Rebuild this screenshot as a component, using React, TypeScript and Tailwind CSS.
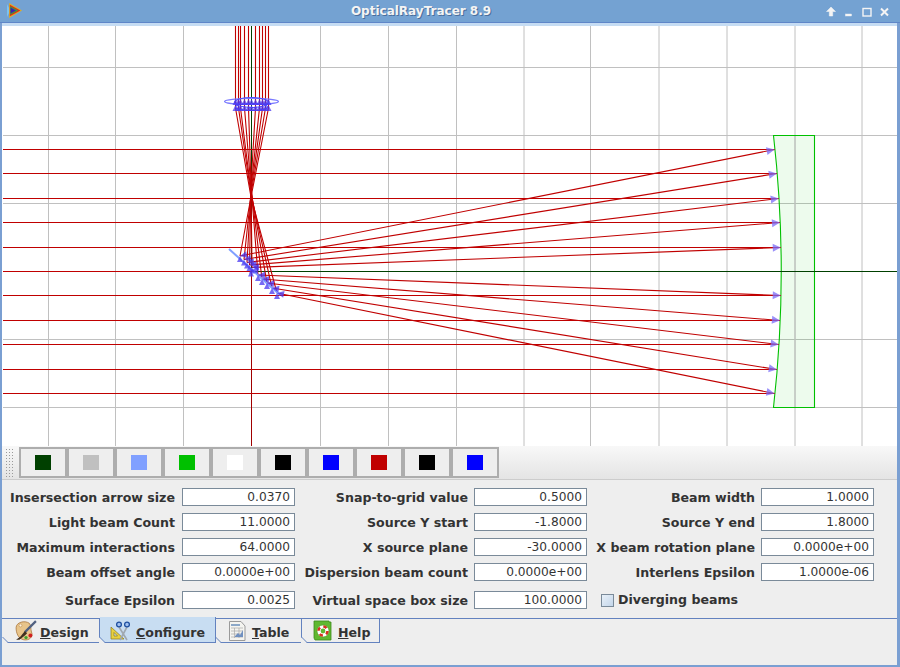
const GRID_X = [48.5, 115.5, 183.5, 320.5, 388.5, 456.5, 524, 590.5, 659, 727, 795, 862]
const GRID_Y = [67.5, 135.5, 203.5, 339.5, 407.5]

// incoming ray heights, where each one lands on the mirror, and its x at the top lens
const RAY_Y = [149.5, 173.5, 198.5, 222.5, 247.5, 271.5, 295.5, 320.5, 344.5, 369.5, 393.5]
const MIRROR = [
  [240, 256], [244, 259.5], [247, 262.5], [249.5, 265], [252, 267.5], [251, 270.5],
  [258, 275], [262, 279], [267, 283], [272, 288], [277, 293],
]
const TOP_X = [268.5, 265.5, 262.5, 259.5, 255.5, 251.5, 248.5, 244.5, 240.5, 238.5, 235.5]

const lensX = (y: number) => 781 - 8 * ((y - 271) / 135.5) ** 2

function Arrow({ x, y, fromX, fromY, size = 8, dark }: { x: number; y: number; fromX: number; fromY: number; size?: number; dark?: boolean }) {
  const a = (Math.atan2(y - fromY, x - fromX) * 180) / Math.PI
  return (
    <polygon
      points={`0,0 ${-size},${-size * 0.5} ${-size},${size * 0.5}`}
      transform={`translate(${x} ${y}) rotate(${a})`}
      fill={dark ? '#4a38f0' : '#7a6cf8'}
      fillOpacity={0.75}
    />
  )
}

function RayCanvas() {
  return (
    <svg viewBox="2 26 895 420" className="block h-[420px] w-[895px] bg-white">
      {GRID_X.map((x) => (
        <line key={x} x1={x} x2={x} y1={26} y2={446} stroke="#c0c0c0" />
      ))}
      {GRID_Y.map((y) => (
        <line key={y} x1={3} x2={897} y1={y} y2={y} stroke="#c0c0c0" />
      ))}

      {/* big lens */}
      <path d="M773.5 135.5 Q789 271 773.5 407.5 L814.5 407.5 L814.5 135.5 Z" fill="#00c000" fillOpacity={0.07} stroke="#00c000" strokeWidth={1.1} />
      <line x1={795} x2={795} y1={136} y2={407} stroke="#c0c0c0" />

      {/* axes */}
      <line x1={251.5} x2={251.5} y1={26} y2={271} stroke="#004000" />
      <line x1={251.5} x2={897} y1={271.5} y2={271.5} stroke="#004000" />
      <line x1={251.5} x2={251.5} y1={271} y2={446} stroke="#a00000" />
      <line x1={3} x2={251} y1={271.5} y2={271.5} stroke="#c00000" />

      {/* rays, the outer ones cross a little before the focus */}
      {RAY_Y.map((y, i) => {
        if (i === 5) return null
        const hit = lensX(y)
        const [mx, my] = MIRROR[i]
        const crossY = 182 + 3 * Math.abs(i - 5)
        return (
          <g key={y} fill="none" stroke="#c00000" strokeWidth={1.1}>
            <line x1={3} x2={hit} y1={y} y2={y} />
            <line x1={hit} y1={y} x2={mx} y2={my} />
            <polyline points={`${mx},${my} 251,${crossY} ${TOP_X[i]},108 ${TOP_X[i]},26`} />
          </g>
        )
      })}

      {/* top lens */}
      <g fill="none" stroke="#7a7aff" strokeWidth={1.2}>
        <ellipse cx={251.5} cy={101.5} rx={27} ry={3} />
        <ellipse cx={251.5} cy={102.5} rx={17} ry={5} stroke="#5050ff" />
        <ellipse cx={251.5} cy={107} rx={16} ry={3.5} stroke="#5050ff" />
      </g>
      {TOP_X.map((x) => (
        <g key={x}>
          <Arrow x={x} y={99} fromX={x} fromY={105} size={6} dark />
          <Arrow x={x} y={105} fromX={x} fromY={111} size={6} dark />
        </g>
      ))}

      {/* mirror */}
      <line x1={229} y1={249} x2={280} y2={295} stroke="#80a0ff" strokeWidth={2} />
      {RAY_Y.map((y, i) => (
        <g key={y}>
          {i !== 5 && <Arrow x={lensX(y)} y={y} fromX={MIRROR[i][0]} fromY={MIRROR[i][1]} />}
          <Arrow x={MIRROR[i][0]} y={MIRROR[i][1]} fromX={lensX(y)} fromY={i === 5 ? MIRROR[i][1] : y} size={7} dark />
          <Arrow x={MIRROR[i][0]} y={MIRROR[i][1]} fromX={MIRROR[i][0]} fromY={MIRROR[i][1] + 8} size={6} dark />
        </g>
      ))}
    </svg>
  )
}

function TitleBar() {
  return (
    <div className="relative flex h-[22px] items-center justify-center bg-[#74a2d2]">
      <svg viewBox="0 0 14 14" className="absolute left-[7px] top-[3px] h-[15px] w-[15px]">
        <path d="M0 1 L3 7 L0 13 Z" fill="#7cc4f0" />
        <path d="M2 0 L14 7 L2 14 Z" fill="#e0b020" />
        <path d="M2.6 1.6 L12.4 7 L2.6 12.4 Z" fill="#e02020" />
        <path d="M3 3 L10.4 7 L3 11 Z" fill="#30b030" />
        <path d="M3.4 4.3 L8.4 7 L3.4 9.7 Z" fill="#4020b0" />
      </svg>
      <span className="ml-[-58px] font-['DejaVu_Sans',sans-serif] text-[12px] font-bold text-[#f4f4f4] [text-shadow:1px_1px_0_#4a6f9c]">
        OpticalRayTracer 8.9
      </span>
      <div className="absolute right-0 top-0 h-[22px] w-[80px]">
        <svg viewBox="0 0 80 22" className="h-[22px] w-[80px]" fill="#f4f4f4" stroke="#f4f4f4">
          <path d="M11 8 L15.5 12.5 H12.7 V17 H9.3 V12.5 H6.5 Z" strokeWidth={0.5} transform="translate(0 -1)" />
          <rect x={25.5} y={14} width={6} height={2} strokeWidth={0.4} />
          <rect x={43} y={8.5} width={8} height={7.5} fill="none" strokeWidth={1.4} />
          <path d="M61 8.5 L68 15.5 M68 8.5 L61 15.5" fill="none" strokeWidth={2} />
        </svg>
      </div>
    </div>
  )
}

const SWATCHES = ['#004000', '#c0c0c0', '#80a0ff', '#00c000', '#ffffff', '#000000', '#0000ff', '#c00000', '#000000', '#0000ff']

function ColorBar() {
  return (
    <div className="flex h-[34px] items-start border-b border-[#cccccc] bg-gradient-to-b from-[#f8f8f8] to-[#e4e4e4] pl-[3px] pt-px">
      <div className="mr-[4px] mt-[1px] h-[30px] w-[10px] bg-[radial-gradient(#9a9a9a_1px,transparent_1px)] bg-[length:3px_3px]" />
      {SWATCHES.map((c, i) => (
        <div key={i} className="flex h-[31px] w-[48px] items-center justify-center border-2 border-[#adadad] bg-[#eeeeee]">
          <div className="h-[15px] w-[16px]" style={{ background: c }} />
        </div>
      ))}
    </div>
  )
}

function Label({ children, first }: { children: string; first?: boolean }) {
  return (
    <div className={`pt-px text-right font-['DejaVu_Sans',sans-serif] text-[12.6px] font-bold leading-[17px] text-[#333333] ${first ? 'pr-[7px]' : 'pr-[6px]'}`}>
      {children}
    </div>
  )
}

function Field({ value }: { value: string }) {
  return (
    <div className="flex h-[18px] items-center justify-end border border-[#7a8a99] bg-white pr-[4px] pt-px font-['DejaVu_Sans',sans-serif] text-[12.2px] leading-[15px] text-[#333333]">
      {value}
    </div>
  )
}

const ROWS = [
  ['Insersection arrow size', '0.0370', 'Snap-to-grid value', '0.5000', 'Beam width', '1.0000'],
  ['Light beam Count', '11.0000', 'Source Y start', '-1.8000', 'Source Y end', '1.8000'],
  ['Maximum interactions', '64.0000', 'X source plane', '-30.0000', 'X beam rotation plane', '0.0000e+00'],
  ['Beam offset angle', '0.0000e+00', 'Dispersion beam count', '0.0000e+00', 'Interlens Epsilon', '1.0000e-06'],
]

function ConfigForm() {
  return (
    <div className="grid h-[138px] grid-cols-[180px_113px_179px_113px_174px_113px] content-start items-center gap-y-[7px] pt-[8px]">
      {ROWS.map((r) => (
        <div key={r[0]} className="contents">
          <Label first>{r[0]}</Label>
          <Field value={r[1]} />
          <Label>{r[2]}</Label>
          <Field value={r[3]} />
          <Label>{r[4]}</Label>
          <Field value={r[5]} />
        </div>
      ))}
      <div className="contents">
        <div className="mt-[3px]"><Label first>Surface Epsilon</Label></div>
        <div className="mt-[3px]"><Field value="0.0025" /></div>
        <div className="mt-[3px]"><Label>Virtual space box size</Label></div>
        <div className="mt-[3px]"><Field value="100.0000" /></div>
        <div className="col-span-2 mt-[3px] flex items-center pl-[14px] font-['DejaVu_Sans',sans-serif] text-[12.6px] font-bold leading-[18px] text-[#333333]">
          <div className="mr-[4px] h-[13px] w-[13px] border border-[#7a8a99] bg-gradient-to-br from-[#e8f0f8] to-[#c4d6ea]" />
          Diverging beams
        </div>
      </div>
    </div>
  )
}

function DesignIcon() {
  return (
    <svg viewBox="0 0 20 20" className="h-[22px] w-[22px]">
      <path d="M1 7 C1 2 9 0 13 3 C15 5 14 8 15 11 C17 15 13 19 8 18 C3 17 1 12 1 7 Z" fill="#e8c48a" stroke="#a8743a" strokeWidth={0.7} />
      <circle cx={5} cy={5} r={1.3} fill="#fff2d8" stroke="#a8743a" strokeWidth={0.4} />
      <circle cx={14} cy={14} r={1.8} fill="#d02020" />
      <circle cx={10} cy={16} r={1.5} fill="#40a030" />
      <path d="M19 1 L9 11" stroke="#506080" strokeWidth={2} />
      <path d="M9 10 L5 15 L1 18 L4 18 L9 14 L11 12 Z" fill="#403020" />
    </svg>
  )
}

function ConfigureIcon() {
  return (
    <svg viewBox="0 0 22 20" className="h-[20px] w-[22px]">
      <path d="M1 18 L1 6 L14 18 Z M4 15 L7.5 15 L4 11.5 Z" fill="#e8d040" fillRule="evenodd" stroke="#8a7a20" strokeWidth={0.7} />
      <path d="M9 6 L17 19 M17 6 L10 19" stroke="#a0a8b0" strokeWidth={1.6} />
      <circle cx={9} cy={3.5} r={2.4} fill="#a0c0f0" stroke="#2050a0" strokeWidth={1.3} />
      <circle cx={17} cy={3.5} r={2.4} fill="#a0c0f0" stroke="#2050a0" strokeWidth={1.3} />
    </svg>
  )
}

function TableIcon() {
  return (
    <svg viewBox="0 0 18 20" className="h-[20px] w-[18px]">
      <path d="M1.5 0.5 H13 L17 5 V19.5 H1.5 Z" fill="#f4f4f0" stroke="#9a9a9a" />
      <rect x={3} y={3} width={9} height={2} fill="#8ca8c8" />
      <path d="M3 7 H15 M3 10 H15 M3 13 H15 M3 16 H15 M6.5 7 V17 M11 7 V17" stroke="#a8a8a8" strokeWidth={0.7} />
      <path d="M7 15 L10 12 L12 14 L15 9 V16 H7 Z" fill="#7090c0" />
    </svg>
  )
}

function HelpIcon() {
  return (
    <svg viewBox="0 0 19 21" className="h-[21px] w-[19px]">
      <path d="M1 1 H16 V2 H18 V20 H2 L1 18 Z" fill="#60b830" stroke="#3c8a1c" strokeWidth={0.8} />
      <circle cx={10} cy={11} r={6} fill="#ffffff" stroke="#4a9a24" strokeWidth={0.6} />
      <circle cx={10} cy={11} r={4.5} fill="none" stroke="#d83020" strokeWidth={2.6} strokeDasharray="3.5 3.5" />
      <circle cx={10} cy={11} r={2.4} fill="#60b830" />
    </svg>
  )
}

const TABS = [
  { letter: 'D', rest: 'esign', icon: <DesignIcon />, width: 'w-[97px]', pad: 'pl-[12px]', gap: 'gap-[3px]' },
  { letter: 'C', rest: 'onfigure', icon: <ConfigureIcon />, width: 'w-[116px]', pad: 'pl-[10px]', gap: 'gap-[4px]', active: true },
  { letter: 'T', rest: 'able', icon: <TableIcon />, width: 'w-[86px]', pad: 'pl-[12px]', gap: 'gap-[6px]' },
  { letter: 'H', rest: 'elp', icon: <HelpIcon />, width: 'w-[78px]', pad: 'pl-[11px]', gap: 'gap-[6px]' },
]

function TabStrip() {
  return (
    <div className="flex h-[47px] items-start border-t border-[#6382bf] bg-[#eeeeee] pl-px">
      {TABS.map((t) => (
        <div
          key={t.letter}
          className={`relative flex items-center ${t.width} ${t.pad} ${t.gap} border-b border-r border-[#6382bf] font-['DejaVu_Sans',sans-serif] text-[12.6px] font-bold leading-[17px] text-[#333333] ${
            t.active ? 'z-10 -mt-[2px] h-[26px] bg-[#c8ddf2] pt-[2px]' : 'h-[24px] bg-[#eeeeee]'
          }`}
        >
          <svg viewBox="0 0 6 6" className="absolute -bottom-px -left-px h-[6px] w-[6px]">
            <path d="M0 0 V6 H6 Z" fill="#eeeeee" />
            <path d="M0.5 0 L6 5.5" stroke="#6382bf" />
          </svg>
          {t.icon}
          <span className="pt-[3px]">
            <u>{t.letter}</u>
            {t.rest}
          </span>
        </div>
      ))}
    </div>
  )
}

export default function App() {
  return (
    <div className="flex h-[667px] w-[900px] flex-col overflow-hidden bg-[#eeeeee]">
      <TitleBar />
      <div className="h-px bg-[#5f86c8]" />
      <div className="flex flex-1 flex-col border-b-2 border-l-2 border-r-[3px] border-[#7a9fd2]">
        <div className="h-[3px] bg-[#c5dcf3]" />
        <RayCanvas />
        <ColorBar />
        <ConfigForm />
        <TabStrip />
      </div>
    </div>
  )
}
